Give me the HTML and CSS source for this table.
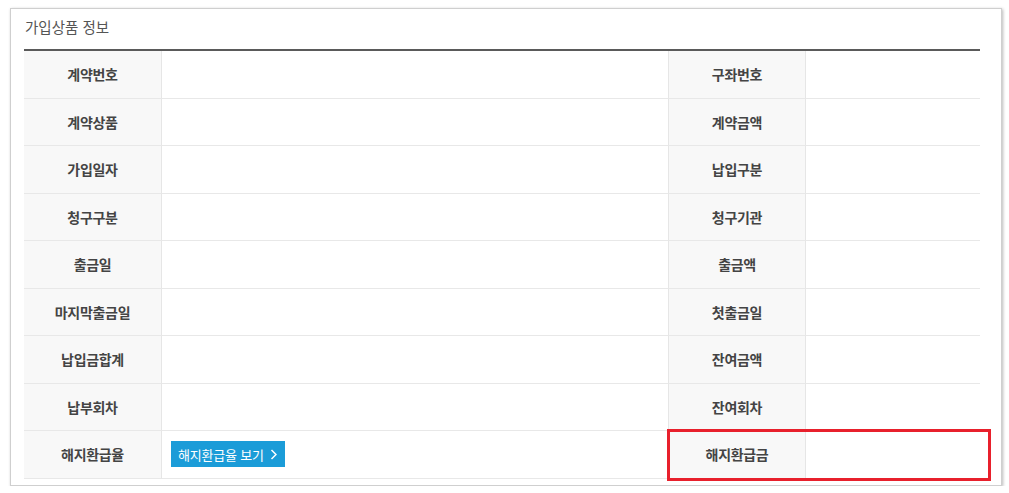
FILE: index.html
```html
<!DOCTYPE html>
<html lang="ko">
<head>
<meta charset="utf-8">
<link rel="stylesheet" href="styles.css">
</head>
<body>
<div class="card">
  <div class="title">가입상품 정보</div>
  <div class="grid">
    <div class="lbl">계약번호</div><div class="val"></div><div class="lbl lbl-r">구좌번호</div><div class="val"></div>
    <div class="lbl">계약상품</div><div class="val"></div><div class="lbl lbl-r">계약금액</div><div class="val"></div>
    <div class="lbl">가입일자</div><div class="val"></div><div class="lbl lbl-r">납입구분</div><div class="val"></div>
    <div class="lbl">청구구분</div><div class="val"></div><div class="lbl lbl-r">청구기관</div><div class="val"></div>
    <div class="lbl">출금일</div><div class="val"></div><div class="lbl lbl-r">출금액</div><div class="val"></div>
    <div class="lbl">마지막출금일</div><div class="val"></div><div class="lbl lbl-r">첫출금일</div><div class="val"></div>
    <div class="lbl">납입금합계</div><div class="val"></div><div class="lbl lbl-r">잔여금액</div><div class="val"></div>
    <div class="lbl">납부회차</div><div class="val"></div><div class="lbl lbl-r">잔여회차</div><div class="val"></div>
    <div class="lbl">해지환급율</div>
    <div class="val"><span class="btn">해지환급율 보기<svg class="chev" width="7" height="11" viewBox="0 0 7 11"><path d="M1.5 1l4.5 4.5-4.5 4.5" fill="none" stroke="#fff" stroke-width="1.5"/></svg></span></div>
    <div class="lbl lbl-r">해지환급금</div><div class="val"></div>
  </div>
  <div class="highlight"></div>
</div>
</body>
</html>
```

FILE: styles.css
```css
* { box-sizing: border-box; }
html, body { margin: 0; padding: 0; background: #fff; }
body {
  font-family: "Noto Sans CJK KR", "Noto Sans", sans-serif;
  color: #333;
}
.card {
  position: relative;
  margin: 8px 0 0 10px;
  width: 992px;
  height: 478px;
  border: 1px solid #cfcfcf;
  box-shadow: 1px 1px 3px rgba(0,0,0,0.28);
  padding: 0 21px 0 13px;
  background: #fff;
}
.title {
  height: 40px;
  padding: 9px 0 0 1px;
  font-size: 14.5px;
  line-height: 18px;
  letter-spacing: 0;
  color: #555;
}
.grid {
  display: grid;
  grid-template-columns: 138px 506px 138px 174px;
  grid-auto-rows: 47.5px;
  border-top: 2px solid #5a5a5a;
}
.lbl, .val {
  border-bottom: 1px solid #e8e8e8;
}
.lbl {
  background: #f8f8f8;
  border-right: 1px solid #e6e6e6;
  display: flex;
  align-items: center;
  justify-content: center;
  font-size: 14px;
  font-weight: 700;
  letter-spacing: -0.3px;
  color: #444;
}
.lbl-r { border-left: 1px solid #e6e6e6; }
.val {
  display: flex;
  align-items: center;
  padding-left: 9px;
}
.btn {
  display: inline-flex;
  align-items: center;
  gap: 6px;
  height: 26px;
  padding: 0 8px 0 7px;
  background: #1b9cd8;
  color: #fff;
  font-size: 13px;
  letter-spacing: -0.2px;
}
.chev { display: block; }
.highlight {
  position: absolute;
  left: 656px;
  top: 420px;
  width: 324px;
  height: 52px;
  border: 3px solid #e8202c;
}
```
